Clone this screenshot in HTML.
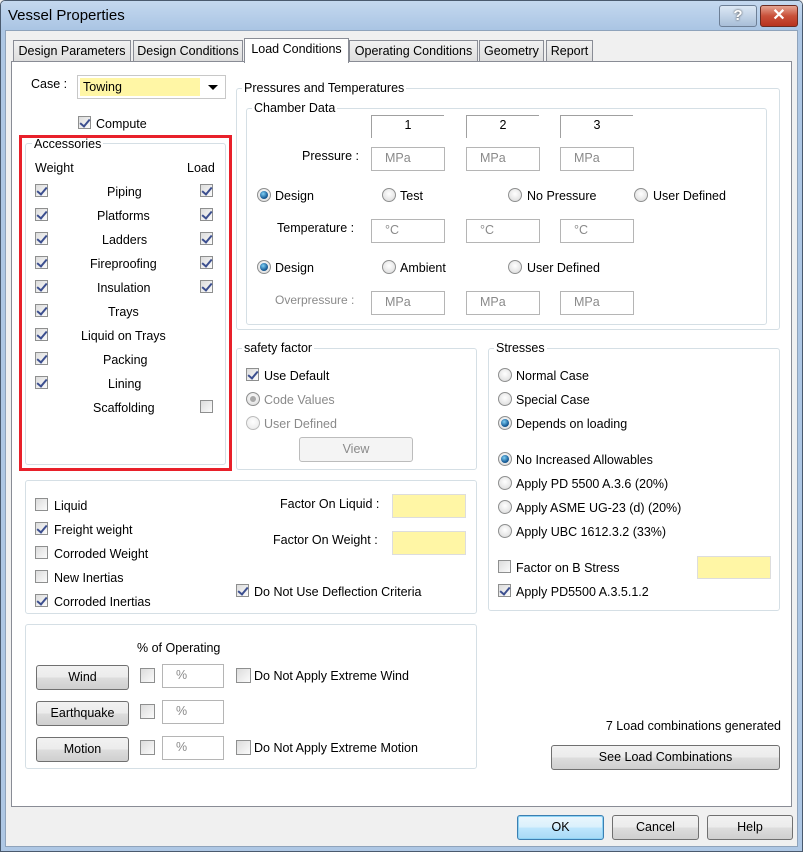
<!DOCTYPE html>
<html><head><meta charset="utf-8"><style>
*{box-sizing:border-box;margin:0;padding:0}
body{width:803px;height:852px;overflow:hidden;background:#f0f0f0;font-family:"Liberation Sans",sans-serif;font-size:12.5px;color:#000;position:relative}
.a{position:absolute;white-space:nowrap}
.t{position:absolute;white-space:nowrap;line-height:14px;transform:translateY(-7px)}
.cb{position:absolute;width:13px;height:13px;border:1px solid #8e8f8f;background:linear-gradient(135deg,#dcdcdc,#fbfbfb);transform:translateY(-7px)}
.cb.c::after{content:"";position:absolute;left:3px;top:0px;width:4px;height:8px;border:solid #3c4f8f;border-width:0 2px 2px 0;transform:rotate(40deg)}
.rd{position:absolute;width:14px;height:14px;border-radius:50%;border:1px solid #8e8f8f;background:radial-gradient(circle at 50% 40%,#fff,#d8d8d8);transform:translateY(-7px)}
.rd.s::after{content:"";position:absolute;left:2px;top:2px;width:8px;height:8px;border-radius:50%;background:radial-gradient(circle at 40% 35%,#7fd0f5,#1a5f9a 60%,#0d3d6b)}
.rd.g::after{content:"";position:absolute;left:3px;top:3px;width:6px;height:6px;border-radius:50%;background:#a8a8a8}
.in{position:absolute;border:1px solid #b5b5b5;background:#fff;color:#8a8a8a;padding-left:13px;line-height:21px}
.gb{position:absolute;border:1px solid #d5dfe5;border-radius:3px}
.gt{position:absolute;background:#fff;padding:0 2px;line-height:14px}
.bt{position:absolute;border:1px solid #707070;border-radius:3px;background:linear-gradient(#f2f2f2 0,#ebebeb 50%,#dddddd 51%,#cfcfcf 100%);text-align:center;line-height:22px}
.tab{position:absolute;top:40px;height:22px;border:1px solid #898c95;border-bottom:none;background:linear-gradient(#f2f2f2,#dcdcdc);text-align:center;line-height:20px}
.g{color:#8a8a8a}
.y{background:#fff6a5}
</style></head><body>
<!-- window frame -->
<div class="a" style="left:0;top:0;width:803px;height:852px;border:1px solid #4a5a6e;border-radius:5px 5px 0 0;"></div>
<div class="a" style="left:1px;top:1px;width:801px;height:30px;background:linear-gradient(#c4d8ef,#a9c4e3);border-radius:4px 4px 0 0"></div>
<div class="a" style="left:1px;top:30px;width:4px;height:821px;background:#aec7e4"></div>
<div class="a" style="left:798px;top:30px;width:4px;height:821px;background:#aec7e4"></div>
<div class="a" style="left:1px;top:847px;width:801px;height:4px;background:#aec7e4"></div>
<div class="a" style="left:5px;top:30px;width:793px;height:817px;border:1px solid #8fa3bb;background:#f0f0f0"></div>
<div class="t" style="left:8px;top:16px;font-size:15px">Vessel Properties</div>
<div class="a" style="left:719px;top:5px;width:38px;height:22px;border:1px solid #6d7f96;border-radius:3px;background:linear-gradient(#dce8f5,#a8bed8);text-align:center;color:#fff;font-weight:bold;font-size:15px;line-height:20px;text-shadow:0 0 2px #333">?</div>
<div class="a" style="left:760px;top:5px;width:38px;height:22px;border:1px solid #6b2b22;border-radius:3px;background:linear-gradient(#e5a593,#c9503a 50%,#b8331f);text-align:center;color:#fff;font-weight:bold;font-size:16px;line-height:20px">✕</div>

<!-- tabs -->
<div class="tab" style="left:13px;width:118px">Design Parameters</div>
<div class="tab" style="left:133px;width:110px">Design Conditions</div>
<div class="tab" style="left:349px;width:129px">Operating Conditions</div>
<div class="tab" style="left:479px;width:65px">Geometry</div>
<div class="tab" style="left:546px;width:47px">Report</div>
<div class="a" style="left:11px;top:61px;width:781px;height:746px;border:1px solid #898c95;background:#fff"></div>
<div class="a" style="left:244px;top:38px;width:105px;height:25px;border:1px solid #898c95;border-bottom:none;background:#fff;text-align:center;line-height:21px">Load Conditions</div>

<!-- case -->
<div class="t" style="left:31px;top:84px">Case :</div>
<div class="a" style="left:77px;top:75px;width:149px;height:24px;border:1px solid #c8c8c8;background:#fff"></div>
<div class="a y" style="left:80px;top:78px;width:120px;height:18px"></div>
<div class="t" style="left:83px;top:87px">Towing</div>
<div class="a" style="left:208px;top:85px;border-left:5px solid transparent;border-right:5px solid transparent;border-top:5px solid #000"></div>
<div class="cb c" style="left:78px;top:123px"></div><div class="t" style="left:96px;top:124px">Compute</div>

<!-- accessories -->
<div class="gb" style="left:25px;top:143px;width:201px;height:322px"></div>
<div class="gt" style="left:32px;top:137px">Accessories</div>
<div class="a" style="left:19px;top:135px;width:213px;height:336px;border:3px solid #e8202a"></div>
<div class="t" style="left:35px;top:168px">Weight</div><div class="t" style="left:187px;top:168px">Load</div>
<div class="cb c" style="left:35px;top:191px"></div><div class="t" style="left:107px;top:192px">Piping</div><div class="cb c" style="left:200px;top:191px"></div>
<div class="cb c" style="left:35px;top:215px"></div><div class="t" style="left:97px;top:216px">Platforms</div><div class="cb c" style="left:200px;top:215px"></div>
<div class="cb c" style="left:35px;top:239px"></div><div class="t" style="left:102px;top:240px">Ladders</div><div class="cb c" style="left:200px;top:239px"></div>
<div class="cb c" style="left:35px;top:263px"></div><div class="t" style="left:90px;top:264px">Fireproofing</div><div class="cb c" style="left:200px;top:263px"></div>
<div class="cb c" style="left:35px;top:287px"></div><div class="t" style="left:97px;top:288px">Insulation</div><div class="cb c" style="left:200px;top:287px"></div>
<div class="cb c" style="left:35px;top:311px"></div><div class="t" style="left:108px;top:312px">Trays</div>
<div class="cb c" style="left:35px;top:335px"></div><div class="t" style="left:81px;top:336px">Liquid on Trays</div>
<div class="cb c" style="left:35px;top:359px"></div><div class="t" style="left:103px;top:360px">Packing</div>
<div class="cb c" style="left:35px;top:383px"></div><div class="t" style="left:108px;top:384px">Lining</div>
<div class="t" style="left:93px;top:408px">Scaffolding</div><div class="cb" style="left:200px;top:407px"></div>

<!-- pressures -->
<div class="gb" style="left:236px;top:88px;width:544px;height:242px"></div>
<div class="gt" style="left:242px;top:81px">Pressures and Temperatures</div>
<div class="gb" style="left:246px;top:108px;width:521px;height:217px"></div>
<div class="gt" style="left:252px;top:101px">Chamber Data</div>
<div class="a" style="left:371px;top:115px;width:73px;height:23px;border-top:1px solid #a0a0a0;border-left:1px solid #a0a0a0;text-align:center;line-height:18px">1</div>
<div class="a" style="left:466px;top:115px;width:73px;height:23px;border-top:1px solid #a0a0a0;border-left:1px solid #a0a0a0;text-align:center;line-height:18px">2</div>
<div class="a" style="left:560px;top:115px;width:73px;height:23px;border-top:1px solid #a0a0a0;border-left:1px solid #a0a0a0;text-align:center;line-height:18px">3</div>
<div class="t" style="left:302px;top:156px">Pressure :</div>
<div class="in" style="left:371px;top:147px;width:74px;height:24px">MPa</div>
<div class="in" style="left:466px;top:147px;width:74px;height:24px">MPa</div>
<div class="in" style="left:560px;top:147px;width:74px;height:24px">MPa</div>
<div class="rd s" style="left:257px;top:195px"></div><div class="t" style="left:275px;top:196px">Design</div>
<div class="rd" style="left:382px;top:195px"></div><div class="t" style="left:400px;top:196px">Test</div>
<div class="rd" style="left:508px;top:195px"></div><div class="t" style="left:527px;top:196px">No Pressure</div>
<div class="rd" style="left:634px;top:195px"></div><div class="t" style="left:653px;top:196px">User Defined</div>
<div class="t" style="left:277px;top:228px">Temperature :</div>
<div class="in" style="left:371px;top:219px;width:74px;height:24px">°C</div>
<div class="in" style="left:466px;top:219px;width:74px;height:24px">°C</div>
<div class="in" style="left:560px;top:219px;width:74px;height:24px">°C</div>
<div class="rd s" style="left:257px;top:267px"></div><div class="t" style="left:275px;top:268px">Design</div>
<div class="rd" style="left:382px;top:267px"></div><div class="t" style="left:400px;top:268px">Ambient</div>
<div class="rd" style="left:508px;top:267px"></div><div class="t" style="left:527px;top:268px">User Defined</div>
<div class="t g" style="left:275px;top:300px;font-size:12px">Overpressure :</div>
<div class="in" style="left:371px;top:291px;width:74px;height:24px">MPa</div>
<div class="in" style="left:466px;top:291px;width:74px;height:24px">MPa</div>
<div class="in" style="left:560px;top:291px;width:74px;height:24px">MPa</div>

<!-- safety -->
<div class="gb" style="left:236px;top:348px;width:241px;height:122px"></div>
<div class="gt" style="left:242px;top:341px">safety factor</div>
<div class="cb c" style="left:246px;top:375px"></div><div class="t" style="left:264px;top:376px">Use Default</div>
<div class="rd g" style="left:246px;top:399px"></div><div class="t g" style="left:264px;top:400px">Code Values</div>
<div class="rd" style="left:246px;top:423px;opacity:.6"></div><div class="t g" style="left:264px;top:424px">User Defined</div>
<div class="a" style="left:299px;top:437px;width:114px;height:25px;border:1px solid #bcbcbc;border-radius:3px;background:#f4f4f4;color:#8a8a8a;text-align:center;line-height:23px">View</div>

<!-- stresses -->
<div class="gb" style="left:488px;top:348px;width:292px;height:263px"></div>
<div class="gt" style="left:494px;top:341px">Stresses</div>
<div class="rd" style="left:498px;top:375px"></div><div class="t" style="left:516px;top:376px">Normal Case</div>
<div class="rd" style="left:498px;top:399px"></div><div class="t" style="left:516px;top:400px">Special Case</div>
<div class="rd s" style="left:498px;top:423px"></div><div class="t" style="left:516px;top:424px">Depends on loading</div>
<div class="rd s" style="left:498px;top:459px"></div><div class="t" style="left:516px;top:460px">No Increased Allowables</div>
<div class="rd" style="left:498px;top:483px"></div><div class="t" style="left:516px;top:484px">Apply PD 5500 A.3.6 (20%)</div>
<div class="rd" style="left:498px;top:507px"></div><div class="t" style="left:516px;top:508px">Apply ASME UG-23 (d) (20%)</div>
<div class="rd" style="left:498px;top:531px"></div><div class="t" style="left:516px;top:532px">Apply UBC 1612.3.2 (33%)</div>
<div class="cb" style="left:498px;top:567px"></div><div class="t" style="left:516px;top:568px">Factor on B Stress</div>
<div class="a y" style="left:697px;top:556px;width:74px;height:23px;border:1px solid #ddd"></div>
<div class="cb c" style="left:498px;top:591px"></div><div class="t" style="left:516px;top:592px">Apply PD5500 A.3.5.1.2</div>

<!-- lower-left -->
<div class="gb" style="left:25px;top:480px;width:452px;height:134px"></div>
<div class="cb" style="left:35px;top:505px"></div><div class="t" style="left:54px;top:506px">Liquid</div>
<div class="cb c" style="left:35px;top:529px"></div><div class="t" style="left:54px;top:530px">Freight weight</div>
<div class="cb" style="left:35px;top:553px"></div><div class="t" style="left:54px;top:554px">Corroded Weight</div>
<div class="cb" style="left:35px;top:577px"></div><div class="t" style="left:54px;top:578px">New Inertias</div>
<div class="cb c" style="left:35px;top:601px"></div><div class="t" style="left:54px;top:602px">Corroded Inertias</div>
<div class="t" style="left:280px;top:504px">Factor On Liquid :</div>
<div class="a y" style="left:392px;top:494px;width:74px;height:24px;border:1px solid #ddd"></div>
<div class="t" style="left:273px;top:540px">Factor On Weight :</div>
<div class="a y" style="left:392px;top:531px;width:74px;height:24px;border:1px solid #ddd"></div>
<div class="cb c" style="left:236px;top:591px"></div><div class="t" style="left:254px;top:592px">Do Not Use Deflection Criteria</div>

<!-- wind -->
<div class="gb" style="left:25px;top:624px;width:452px;height:145px"></div>
<div class="t" style="left:137px;top:648px">% of Operating</div>
<div class="bt" style="left:36px;top:665px;width:93px;height:25px">Wind</div>
<div class="bt" style="left:36px;top:701px;width:93px;height:25px">Earthquake</div>
<div class="bt" style="left:36px;top:737px;width:93px;height:25px">Motion</div>
<div class="cb" style="left:140px;top:675px;width:15px;height:15px"></div>
<div class="cb" style="left:140px;top:711px;width:15px;height:15px"></div>
<div class="cb" style="left:140px;top:747px;width:15px;height:15px"></div>
<div class="in" style="left:162px;top:664px;width:62px;height:24px">%</div>
<div class="in" style="left:162px;top:700px;width:62px;height:24px">%</div>
<div class="in" style="left:162px;top:736px;width:62px;height:24px">%</div>
<div class="cb" style="left:236px;top:675px;width:15px;height:15px"></div><div class="t" style="left:254px;top:676px">Do Not Apply Extreme Wind</div>
<div class="cb" style="left:236px;top:747px;width:15px;height:15px"></div><div class="t" style="left:254px;top:748px">Do Not Apply Extreme Motion</div>

<div class="t" style="right:22px;top:726px">7 Load combinations generated</div>
<div class="bt" style="left:551px;top:745px;width:229px;height:25px">See Load Combinations</div>

<!-- bottom buttons -->
<div class="bt" style="left:517px;top:815px;width:87px;height:25px;border-color:#3c7fb1;background:linear-gradient(#eaf6fd,#d9f0fc 50%,#bee6fd 51%,#a7d9f5);box-shadow:inset 0 0 0 1px #8ed3f5">OK</div>
<div class="bt" style="left:612px;top:815px;width:87px;height:25px">Cancel</div>
<div class="bt" style="left:707px;top:815px;width:86px;height:25px">Help</div>
</body></html>
